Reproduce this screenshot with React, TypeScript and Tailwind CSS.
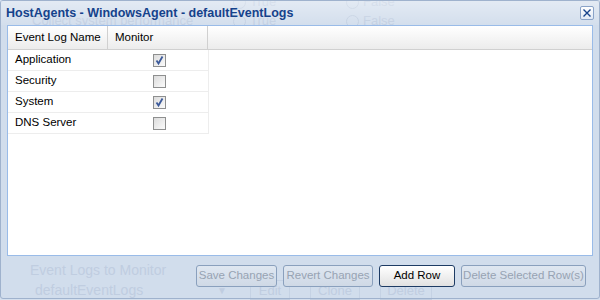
import { useState } from 'react'

const rowsInit = [
  { name: 'Application', on: true },
  { name: 'Security', on: false },
  { name: 'System', on: true },
  { name: 'DNS Server', on: false },
]

const Check = ({ on, onClick }: { on: boolean; onClick: () => void }) => (
  <button
    onClick={onClick}
    className="w-[13px] h-[13px] border border-[#8e8f8f] bg-gradient-to-br from-[#dcdcdc] to-[#fbfbfb] flex items-center justify-center p-0"
  >
    {on && (
      <svg width="11" height="11" viewBox="0 0 11 11">
        <path d="M2.5 5.5 L4.5 8.5 L8.5 1.5" fill="none" stroke="#3c5a9a" strokeWidth="1.8" />
      </svg>
    )}
  </button>
)

const Radio = () => (
  <span className="w-[13px] h-[13px] rounded-full border border-[#b8c6d9] inline-block" />
)

const Btn = ({ label, w, active }: { label: string; w: string; active?: boolean }) => (
  <button
    disabled={!active}
    className={`${w} h-[22px] rounded-[3px] border bg-gradient-to-b text-[11.5px] whitespace-nowrap ${
      active
        ? 'border-[#1d3b64] from-white to-[#e1e1e1] text-black'
        : 'border-[#8aa0bd] from-[#dfe7f1] to-[#cfd9e6] text-[#97a3b3]'
    }`}
  >
    {label}
  </button>
)

const App = () => {
  const [rows, setRows] = useState(rowsInit)

  const toggle = (i: number) => {
    setRows(rows.map((r, j) => (j === i ? { ...r, on: !r.on } : r)))
  }

  return (
    <div
      className="relative w-[600px] h-[300px] overflow-hidden bg-[#d4dfed]"
      style={{ fontFamily: '"Liberation Sans", Arial, sans-serif' }}
    >
      {/* page behind the window */}
      <div className="flex flex-col h-full text-[#b7c5d9] text-[13px] whitespace-nowrap">
        <div className="flex items-center h-[16px] -mt-[6px]">
          <span className="w-[233px]" />
          <Radio />
          <span className="ml-[4px] w-[96px]">True</span>
          <Radio />
          <span className="ml-[4px]">False</span>
        </div>
        <div className="flex items-center h-[22px]">
          <span className="ml-[32px] w-[201px]">Collect system performance</span>
          <Radio />
          <span className="ml-[4px] w-[96px]">True</span>
          <Radio />
          <span className="ml-[4px]">False</span>
        </div>
        <div className="flex-1" />
        <div className="flex flex-col pl-[30px] text-[14px]">
          <span className="h-[20px]">Event Logs to Monitor</span>
          <div className="flex items-center h-[20px]">
            <span className="ml-[5px] w-[182px]">defaultEventLogs</span>
            <span className="text-[10px] w-[33px]">▼</span>
            <span className="border border-[#c0cde0] w-[40px] h-[20px] text-center text-[13px]">Edit</span>
            <span className="ml-[20px] border border-[#c0cde0] w-[50px] h-[20px] text-center text-[13px]">Clone</span>
            <span className="ml-[20px] border border-[#c0cde0] w-[52px] h-[20px] text-center text-[13px]">Delete</span>
          </div>
        </div>
      </div>

      {/* window */}
      <div className="absolute left-0 top-0 w-[600px] h-[299px] border border-[#9fb2cd] rounded-[3px] bg-[#cddaea]/40 flex flex-col">
        <div className="h-[24px] flex items-center justify-between pl-[5px] pr-[5px] bg-gradient-to-b from-white/40 to-white/5">
          <span className="text-[12.5px] font-bold text-[#15428b]">HostAgents - WindowsAgent - defaultEventLogs</span>
          <span className="w-[14px] h-[14px] rounded-[2px] border border-[#8aa3c8] bg-gradient-to-b from-white to-[#dfe8f5] flex items-center justify-center">
            <svg width="10" height="10" viewBox="0 0 10 10">
              <path d="M1.5 1.5 L8.5 8.5 M8.5 1.5 L1.5 8.5" stroke="#15428b" strokeWidth="1.4" />
            </svg>
          </span>
        </div>
        <div className="mx-[6px] h-[231px] border border-[#99bbe8] bg-white">
          <div className="flex h-[24px] bg-gradient-to-b from-white to-[#ececec] border-b border-[#d0d0d0] text-[11.5px] text-black">
            <div className="w-[100px] pl-[7px] flex items-center border-r border-[#d0d0d0]">Event Log Name</div>
            <div className="w-[100px] pl-[7px] flex items-center border-r border-[#d0d0d0]">Monitor</div>
          </div>
          <div className="w-[201px] text-[11.5px] text-black">
            {rows.map((r, i) => (
              <div key={r.name} className="flex h-[21px] items-center border-b border-r border-[#ededed]">
                <span className="w-[145px] pl-[7px]">{r.name}</span>
                <Check on={r.on} onClick={() => toggle(i)} />
              </div>
            ))}
          </div>
        </div>
        <div className="flex justify-end gap-[6px] pr-[13px] pt-[9px]">
          <Btn label="Save Changes" w="w-[81px]" />
          <Btn label="Revert Changes" w="w-[90px]" />
          <Btn label="Add Row" w="w-[76px]" active />
          <Btn label="Delete Selected Row(s)" w="w-[125px]" />
        </div>
      </div>
    </div>
  )
}

export default App
